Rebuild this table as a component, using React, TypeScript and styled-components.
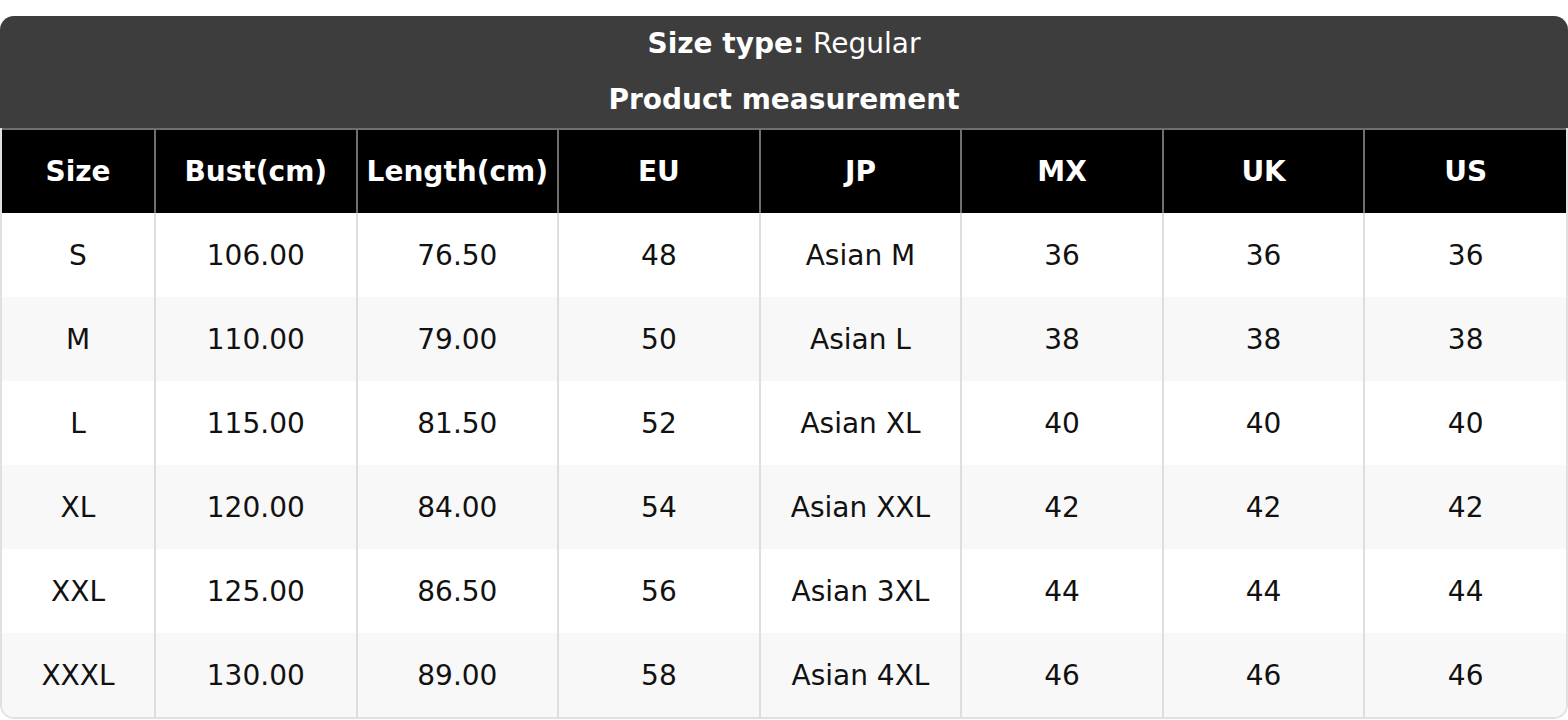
import React from "react";
import styled, { createGlobalStyle } from "styled-components";

const GlobalStyle = createGlobalStyle`
    html, body {
        margin: 0;
        padding: 0;
        background: #ffffff;
        font-family: "DejaVu Sans", "Liberation Sans", sans-serif;
    }
`;

const Page = styled.div`
    padding-top: 16px;
`;

const Card = styled.div`
    border-radius: 14px;
    overflow: hidden;
    background: #ffffff;
`;

const Caption = styled.div`
    background: #3d3d3d;
    color: #ffffff;
    text-align: center;
    font-size: 28px;
`;

const CaptionLine = styled.div`
    height: 56px;
    line-height: 56px;
`;

const Body = styled.div`
    border: 2px solid #e0e0e0;
    border-top: none;
    border-radius: 0 0 14px 14px;
    overflow: hidden;
`;

const Table = styled.table`
    width: 100%;
    border-collapse: collapse;
    table-layout: fixed;
    font-size: 28px;
`;

const HeadCell = styled.th<{ $first?: boolean }>`
    background: #000000;
    color: #ffffff;
    font-weight: bold;
    height: 83px;
    padding: 0;
    text-align: center;
    border-top: 2px solid #6f6f6f;
    border-left: ${(p) => (p.$first ? "none" : "2px solid #6f6f6f")};
    white-space: nowrap;
`;

const Row = styled.tr<{ $odd: boolean }>`
    background: ${(p) => (p.$odd ? "#f8f8f8" : "#ffffff")};
`;

const Cell = styled.td<{ $first?: boolean }>`
    height: 84px;
    padding: 0;
    text-align: center;
    color: #111111;
    border-left: ${(p) => (p.$first ? "none" : "2px solid #dedede")};
    white-space: nowrap;
`;

const columns = ["Size", "Bust(cm)", "Length(cm)", "EU", "JP", "MX", "UK", "US"];

const rows = [
    ["S", "106.00", "76.50", "48", "Asian M", "36", "36", "36"],
    ["M", "110.00", "79.00", "50", "Asian L", "38", "38", "38"],
    ["L", "115.00", "81.50", "52", "Asian XL", "40", "40", "40"],
    ["XL", "120.00", "84.00", "54", "Asian XXL", "42", "42", "42"],
    ["XXL", "125.00", "86.50", "56", "Asian 3XL", "44", "44", "44"],
    ["XXXL", "130.00", "89.00", "58", "Asian 4XL", "46", "46", "46"],
];

export default function App() {
    return (
        <Page>
            <GlobalStyle />
            <Card>
                <Caption>
                    <CaptionLine>
                        <b>Size type:</b> Regular
                    </CaptionLine>
                    <CaptionLine>
                        <b>Product measurement</b>
                    </CaptionLine>
                </Caption>
                <Body>
                    <Table>
                        <colgroup>
                            <col style={{ width: 153 }} />
                            {columns.slice(1).map((c) => (
                                <col key={c} />
                            ))}
                        </colgroup>
                        <thead>
                            <tr>
                                {columns.map((c, i) => (
                                    <HeadCell key={c} $first={i === 0}>
                                        {c}
                                    </HeadCell>
                                ))}
                            </tr>
                        </thead>
                        <tbody>
                            {rows.map((r, ri) => (
                                <Row key={r[0]} $odd={ri % 2 === 1}>
                                    {r.map((v, ci) => (
                                        <Cell key={ci} $first={ci === 0}>
                                            {v}
                                        </Cell>
                                    ))}
                                </Row>
                            ))}
                        </tbody>
                    </Table>
                </Body>
            </Card>
        </Page>
    );
}
